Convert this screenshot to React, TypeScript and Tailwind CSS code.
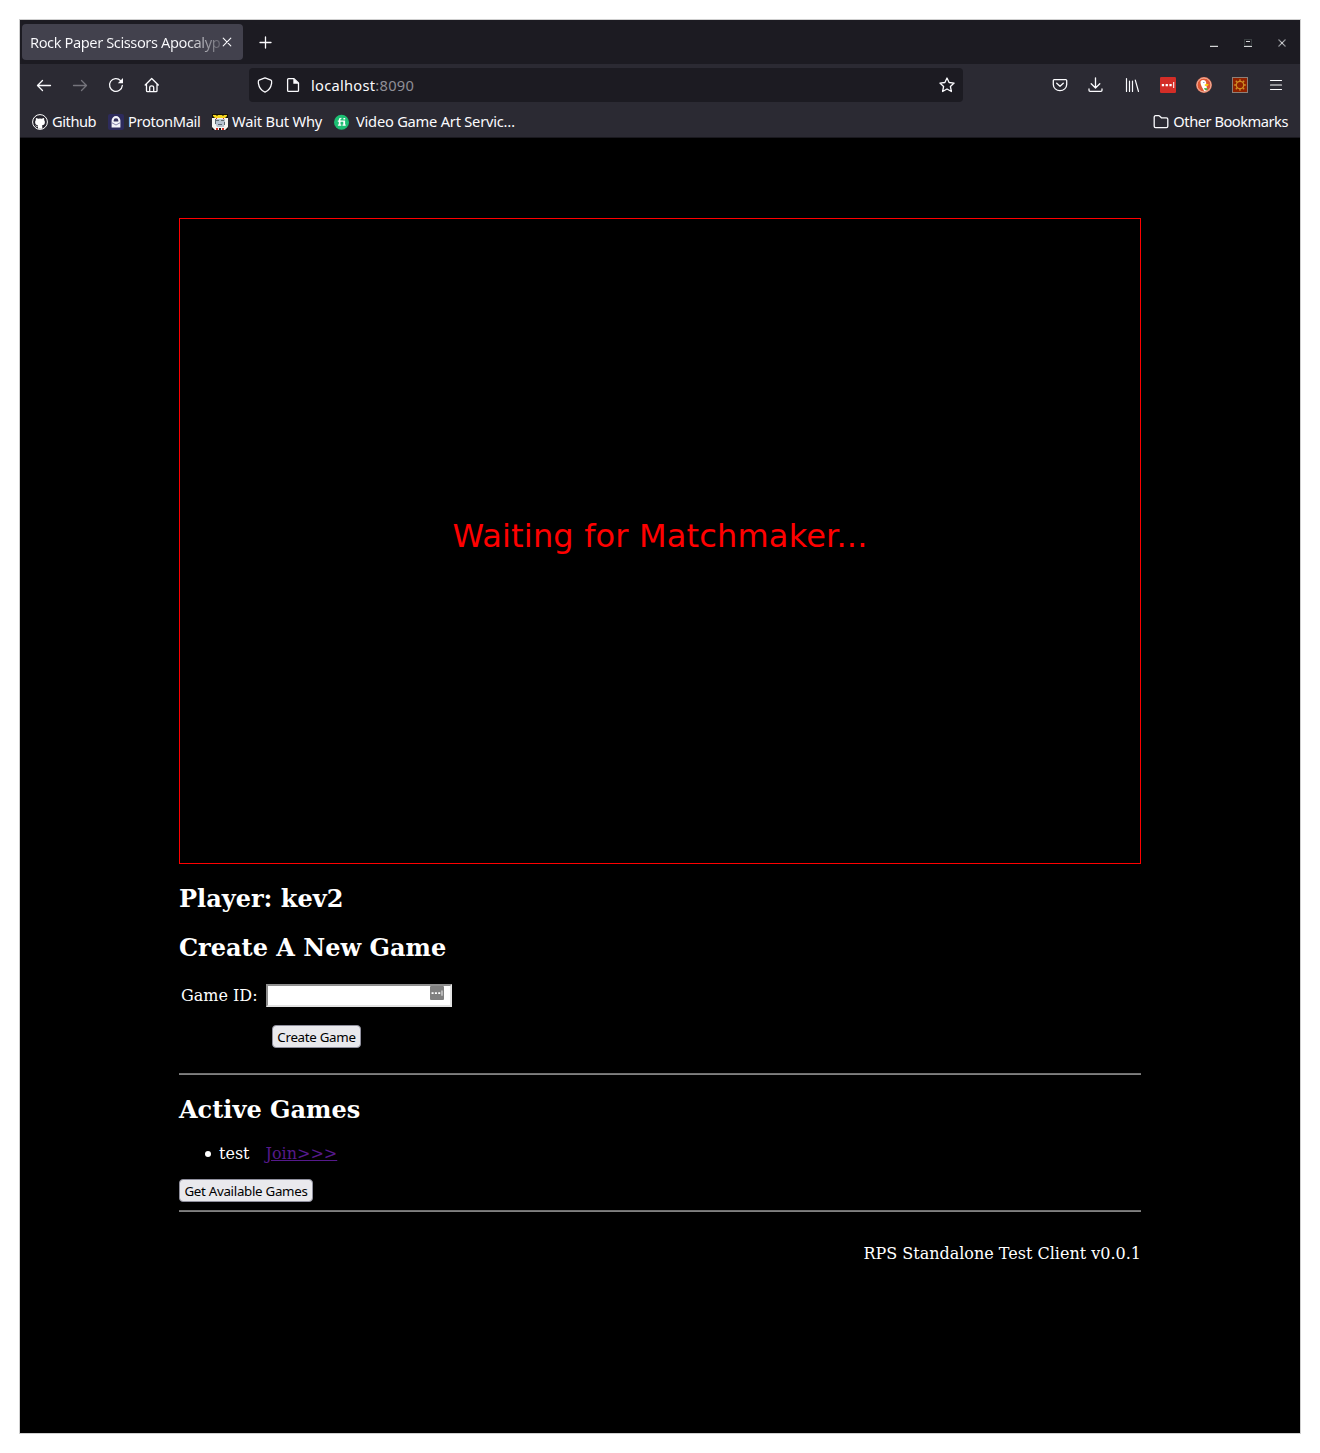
import React from "react";

const stroke = { fill: "none", stroke: "currentColor", strokeLinecap: "round", strokeLinejoin: "round" } as const;

function Icon({ children, className = "", size = 16 }: { children: React.ReactNode; className?: string; size?: number }) {
  return (
    <svg width={size} height={size} viewBox={`0 0 ${size} ${size}`} className={`shrink-0 ${className}`}>
      {children}
    </svg>
  );
}

function TabStrip() {
  return (
    <div className="flex h-11 items-center bg-[#1c1b22] pl-[2px] pr-[14px]">
      <div className="flex h-9 w-[221px] items-center rounded bg-[#42414d] pl-2">
        <span className="w-[190px] whitespace-nowrap bg-linear-to-r from-[#fbfbfe] from-82% to-[#fbfbfe]/20 bg-clip-text tracking-[-0.43px] text-transparent">
          Rock Paper Scissors Apocalyp
        </span>
        <Icon className="-mt-px">
          <path d="M3.2 4.2l7.6 7.6M10.8 4.2l-7.6 7.6" {...stroke} strokeWidth="1.1" />
        </Icon>
      </div>
      <Icon className="ml-[14px]">
        <path d="M8.5 3v11M3 8.5h11" {...stroke} strokeWidth="1.3" />
      </Icon>
      <div className="ml-auto flex gap-[26px] pt-[2px] text-[#d5d5d8]">
        <Icon size={8}><path d="M0 7.5h8" stroke="currentColor" /><path d="M0 6.5h8" stroke="#44474a" /></Icon>
        <Icon size={8}><path d="M.5 0v7M7.5 0v7M0 .5h8M0 6.5h8" stroke="#383d40" fill="none" /><path d="M2 2.5h4M0 7.5h8" stroke="currentColor" /></Icon>
        <Icon size={8}><path d="M.5 .5l7 7M7.5 .5l-7 7" stroke="#919297" strokeWidth="1.1" /><path d="M2.5 2.5l3 3M5.5 2.5l-3 3" stroke="#fff" strokeWidth=".5" /></Icon>
      </div>
    </div>
  );
}

function DotsKey({ className, size }: { className: string; size: number }) {
  return (
    <svg width={size} height={size} viewBox="0 0 16 16" className={className}>
      <rect width="16" height="16" rx="1.2" fill="currentColor" />
      <path d="M1.8 7h2.3v2.2H1.8zM5.6 7h2.3v2.2H5.6zM9.4 7h2.3v2.2H9.4zM13.2 5h1v6h-1z" fill="#fff" />
    </svg>
  );
}

function NavBar() {
  return (
    <div className="flex h-[42px] items-center pl-4 pr-4">
      <div className="flex w-[213px] gap-5">
        <Icon><path d="M14.5 8.5H1.6M6.5 3.5L1.5 8.5 6.5 13.5" {...stroke} strokeWidth="1.3" /></Icon>
        <Icon className="text-[#75747c]"><path d="M1.5 8.5h12.9M9.5 3.5L14.5 8.5 9.5 13.5" {...stroke} strokeWidth="1.3" /></Icon>
        <Icon>
          <path d="M14.3 8.5A6.4 6.4 0 1 1 12.6 3.6L14 5" {...stroke} strokeWidth="1.3" />
          <path d="M15 1v5.2h-5.2z" fill="currentColor" />
        </Icon>
        <Icon>
          <path d="M1.2 8L7.7 1.5 14.3 8M2.5 7.2v6.5c0 .6.4 1 1 1h8.5c.6 0 1-.4 1-1V7.2M5.7 14.5v-3.9c0-1 .8-1.8 2-1.8s2 .8 2 1.8v3.9" {...stroke} strokeWidth="1.3" />
        </Icon>
      </div>
      <div className="flex h-[34px] w-[714px] items-center rounded bg-[#1c1b22] px-2">
        <Icon>
          <path d="M8 .9L14 3.2C15 3.6 14.8 5 14.6 6.4 14 10.3 12 13.5 8 15.1 4 13.5 2 10.3 1.4 6.4 1.2 5 1 3.6 2 3.2z" {...stroke} strokeWidth="1.3" />
        </Icon>
        <Icon className="ml-3">
          <path d="M3.6 1.6H9L13.5 6v7.4c0 .6-.4 1-1 1H3.6c-.6 0-1-.4-1-1V2.6c0-.6.4-1 1-1z" {...stroke} strokeWidth="1.3" />
          <path d="M8.3 1.2l5.6 5.6H8.3z" fill="currentColor" />
        </Icon>
        <span className="ml-[10px] tracking-[0.27px]">localhost<span className="text-[#8f8e96]">:8090</span></span>
        <Icon className="ml-auto">
          <path d="M8 1l2.1 4.5 5 .6-3.7 3.4 1 5L8 12l-4.4 2.5 1-5L.9 6.1l5-.6z" {...stroke} strokeWidth="1.3" />
        </Icon>
      </div>
      <div className="ml-auto flex gap-5">
        <Icon>
          <path d="M2.2 2.6h11.6c.5 0 .9.4.9.9V7.5a6.7 6.2 0 0 1-13.4 0v-4c0-.5.4-.9.9-.9zM4.7 6.2L8 9.3l3.3-3.1" {...stroke} strokeWidth="1.3" />
        </Icon>
        <Icon>
          <path d="M7.5 .8v10M3.2 6.8L7.5 11l4.3-4.2M1 12v1.3c0 .6.5 1.1 1.1 1.1h10.8c.6 0 1.1-.5 1.1-1.1V12" {...stroke} strokeWidth="1.3" />
        </Icon>
        <Icon>
          <path d="M2.5 1.5v13M5.5 4.2v10.3M8.5 4.2v10.3M11.3 3.2l3.2 11.3" {...stroke} strokeWidth="1.2" />
        </Icon>
        <DotsKey size={16} className="shrink-0 text-[#d32d27]" />
        <Icon>
          <circle cx="8" cy="8" r="7.9" fill="#e8795c" />
          <circle cx="8" cy="8" r="6.9" fill="#de5833" stroke="#f5cfc3" strokeWidth=".7" />
          <path d="M4.8 4c1.5-1.7 4.8-1.3 5.3 1.3.2 1.2 0 2 .4 3.8l.7 4.2-3 .9c-1.4-2.5-3.6-6-3.7-8.1 0-1 0-1.6.3-2.1z" fill="#fff" />
          <path d="M8.8 7.2l3.8-.3-.7 1.9-3.1.2z" fill="#fdd20a" />
          <path d="M8 11l3.3.2v2l-2.4-.2z" fill="#4cb14a" />
          <circle cx="7.9" cy="5.4" r=".5" fill="#2d4f8e" />
        </Icon>
        <Icon>
          <rect x=".5" y=".5" width="15" height="15" fill="#8f2100" stroke="#8e8078" />
          <circle cx="8" cy="8" r="3.7" fill="none" stroke="#cf8b22" strokeWidth="1.2" />
          <path d="M8 2.2v2M8 11.8v2M2.2 8h2M11.8 8h2M3.8 3.8l1.6 1.6M10.6 10.6l1.6 1.6M12.2 3.8l-1.6 1.6M5.4 10.6l-1.6 1.6" stroke="#cf8b22" strokeWidth="1.4" />
        </Icon>
        <Icon><path d="M2.5 3.5h11M2.5 8h11M2.5 12.5h11" {...stroke} strokeWidth="1.2" /></Icon>
      </div>
    </div>
  );
}

function Bookmarks() {
  return (
    <div className="flex h-[31px] items-center pl-3 pr-3">
      <Icon>
        <circle cx="8" cy="8" r="7.4" fill="#24222b" stroke="#fff" />
        <path d="M6 14.8v-2.2c-2 .4-2.3-.8-2.9-1.2.9-.2 1.3.8 2 .8.5 0 .8-.2 1-.7-2-.3-3-1.4-3-3.5 0-.9.3-1.6.8-2.1-.2-.7-.2-1.4.1-2 .8 0 1.5.4 2.1.9a7 7 0 0 1 3.8 0c.6-.5 1.3-.9 2.1-.9.3.6.3 1.3.1 2 .5.5.8 1.2.8 2.1 0 2.1-1 3.2-3 3.5.3.4.4.9.4 1.5v1.8z" fill="#fff" />
      </Icon>
      <span className="-mt-[2px] ml-1 w-[56px] tracking-[-0.45px] whitespace-nowrap">Github</span>
      <Icon>
        <rect width="16" height="16" rx="2" fill="#2d2b5c" />
        <path d="M3.6 13.5V6.5a4.4 4.4 0 0 1 8.8 0v7z" fill="#f3f3fa" />
        <path d="M5.7 7.5V6.4a2.3 2.1 0 0 1 4.6 0v1.1z" fill="#33315d" />
        <path d="M4 8.8l4 2.2 4-2.2" fill="none" stroke="#77759f" strokeWidth=".9" />
      </Icon>
      <span className="-mt-[2px] ml-1 w-[84px] tracking-[-0.33px] whitespace-nowrap">ProtonMail</span>
      <Icon>
        <rect width="16" height="16" fill="#f4f4f0" />
        <path d="M0 0h16v4H0z" fill="#161205" />
        <path d="M1 1h3l1 1 1-1h4l1 1 1-1h3v1l-2 2H3L1 2z" fill="#f4d51f" />
        <path d="M3 5h10v2l-1 6H5L3 9z" fill="#b6c3d0" />
        <path d="M4 6h3v1H4zM9 6h3v1H9zM6 10h4v1H6zM3 5h1v5H3zM12 8h1v3h-1z" fill="#5e6970" />
        <path d="M0 13l3 3H0zM13 16l3-3v3zM7 14h2v2H7z" fill="#111" />
        <path d="M4 14h2v2H4zM10 14h2v2h-2zM4 4h1v1H4zM11 4h1v1h-1z" fill="#d22d20" />
      </Icon>
      <span className="-mt-[2px] ml-1 w-[102px] tracking-[-0.18px] whitespace-nowrap">Wait But Why</span>
      <Icon>
        <circle cx="7.5" cy="8.3" r="7.5" fill="#1dbf73" />
        <path d="M3.8 6.6h1V6c0-1.5 1-2.3 2.6-2.2V5c-.8 0-1 .3-1 .9v.7h4.7v4h.6v1.2H8.5v-1.2h.8V7.8H6.5v2.8h.8v1.2H3.9v-1.2h.9V7.8h-1zM9.4 4h1.8v1.5H9.4z" fill="#fff" />
      </Icon>
      <span className="-mt-[2px] ml-[6px] tracking-[-0.23px] whitespace-nowrap">Video Game Art Servic…</span>
      <Icon className="ml-auto">
        <path d="M1.2 12.3V3.2c0-.9.5-1.5 1.4-1.5h3.1c.4 0 .8.2 1.1.5L8.4 3.8h5c.9 0 1.4.5 1.4 1.4v7.1c0 .9-.5 1.4-1.4 1.4H2.6c-.9 0-1.4-.5-1.4-1.4z" {...stroke} strokeWidth="1.3" />
      </Icon>
      <span className="-mt-[2px] ml-1 tracking-[-0.48px] whitespace-nowrap">Other Bookmarks</span>
    </div>
  );
}

const buttonClass = "h-[23px] rounded-[4px] border border-[#8f8f9d] bg-[#e9e9ed] pt-[2px] font-['Noto_Sans',sans-serif] text-[13.33px] leading-none tracking-[-0.3px] whitespace-nowrap text-black";

export default function App() {
  return (
    <div className="h-[1453px] w-[1320px] overflow-hidden bg-white p-5">
      <div className="flex h-[1413px] flex-col bg-black outline outline-[#cfcfcf]">
        <header className="border-b border-[#1a191f] bg-[#2b2a33] font-['Noto_Sans',sans-serif] text-[14.67px] leading-5 text-[#fbfbfe]">
          <TabStrip />
          <NavBar />
          <Bookmarks />
        </header>
        <main className="mx-auto w-[962px] pt-[80px] font-['DejaVu_Serif',serif] text-base leading-[19px] text-white">
          <div className="flex h-[646px] items-center justify-center border border-[#ff0000] pb-[11px] font-['DejaVu_Sans',sans-serif] text-[32px] leading-[38px] tracking-[0.17px] text-[#ff0000]">
            Waiting for Matchmaker...
          </div>
          <h2 className="mt-5 text-2xl leading-[29px] font-bold">Player: kev2</h2>
          <h2 className="mt-5 text-2xl leading-[29px] font-bold">Create A New Game</h2>
          <div className="mt-[22px] flex h-[23px] items-center pl-[2px]">
            <label className="w-[85px]">Game ID:</label>
            <div className="flex h-[23px] w-[186px] justify-end border-2 border-t-[#8f8f8f] border-l-[#8f8f8f] border-r-[#e3e3e3] border-b-[#e3e3e3] bg-white pr-[6px]">
              <DotsKey size={14} className="text-[#808080]" />
            </div>
          </div>
          <button className={`mt-[18px] ml-[93px] block w-[89px] ${buttonClass}`}>Create Game</button>
          <hr className="mt-[25px] h-[2px] border-0 border-t border-b border-t-[#707070] border-b-[#808080]" />
          <h2 className="mt-5 text-2xl leading-[29px] font-bold">Active Games</h2>
          <ul className="mt-5 flex h-[19px] items-center pl-[26px]">
            <li className="flex items-center">
              <span className="mt-px mr-[8px] size-[6px] rounded-full bg-white" />
              test
              <a className="ml-4 text-[#551a8b] underline">Join&gt;&gt;&gt;</a>
            </li>
          </ul>
          <button className={`mt-4 block w-[134px] ${buttonClass}`}>Get Available Games</button>
          <hr className="mt-2 h-[2px] border-0 border-t border-b border-t-[#707070] border-b-[#808080]" />
          <footer className="mt-8 text-right">RPS Standalone Test Client v0.0.1</footer>
        </main>
      </div>
    </div>
  );
}
